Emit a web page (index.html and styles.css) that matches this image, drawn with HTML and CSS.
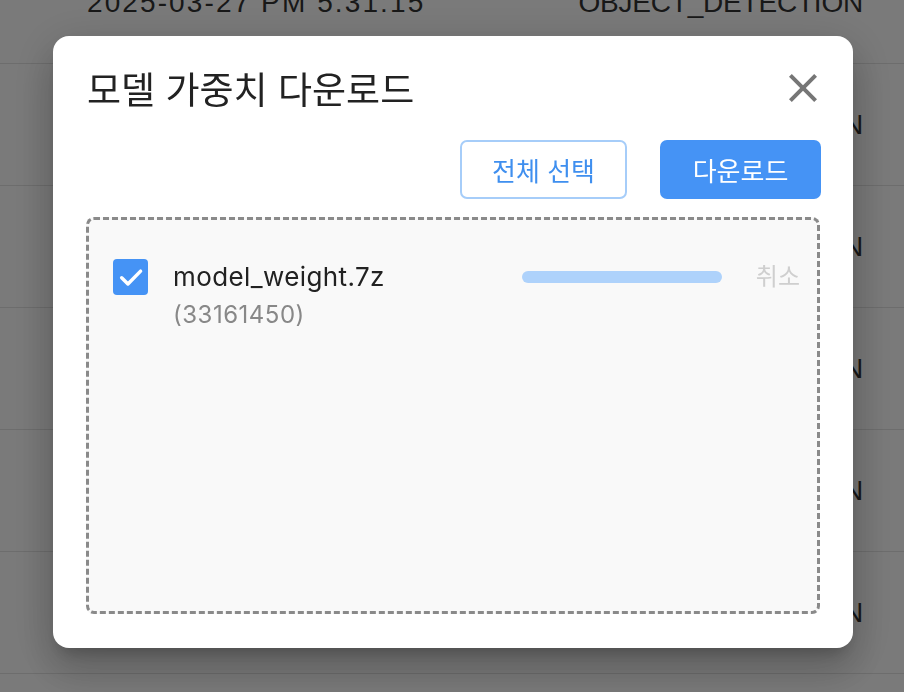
FILE: index.html
```html
<!DOCTYPE html>
<html lang="ko">
<head>
<meta charset="utf-8">
<title>모델 가중치 다운로드</title>
<link rel="stylesheet" href="styles.css">
</head>
<body>
<div class="page">
  <div class="table">
    <div class="row"><span class="date">2025-03-27 PM 5:31:15</span><span class="type">OBJECT_DETECTION</span></div>
    <div class="row"><span class="date">2025-03-27 PM 5:31:15</span><span class="type">OBJECT_DETECTION</span></div>
    <div class="row"><span class="date">2025-03-27 PM 5:31:15</span><span class="type">OBJECT_DETECTION</span></div>
    <div class="row"><span class="date">2025-03-27 PM 5:31:15</span><span class="type">OBJECT_DETECTION</span></div>
    <div class="row"><span class="date">2025-03-27 PM 5:31:15</span><span class="type">OBJECT_DETECTION</span></div>
    <div class="row"><span class="date">2025-03-27 PM 5:31:15</span><span class="type">OBJECT_DETECTION</span></div>
  </div>
</div>
<div class="overlay">
  <div class="dialog">
    <div class="header">
      <h2 class="title">모델 가중치 다운로드</h2>
      <button class="close" aria-label="닫기">
        <svg viewBox="0 0 24 24" width="48" height="48"><path d="M19 6.41 17.59 5 12 10.59 6.41 5 5 6.41 10.59 12 5 17.59 6.41 19 12 13.41 17.59 19 19 17.59 13.41 12z" fill="currentColor"/></svg>
      </button>
    </div>
    <div class="actions">
      <button class="btn btn-outline">전체 선택</button>
      <button class="btn btn-primary">다운로드</button>
    </div>
    <div class="filebox">
      <div class="file">
        <span class="check">
          <svg viewBox="0 0 24 24" width="32" height="32"><path d="M5 12.6 9.7 17.2 19.2 7.6" fill="none" stroke="#fff" stroke-width="2.6" stroke-linecap="round" stroke-linejoin="round"/></svg>
        </span>
        <div class="info">
          <div class="name">model_weight.7z</div>
          <div class="size">(33161450)</div>
        </div>
        <div class="progress"></div>
        <span class="cancel">취소</span>
      </div>
    </div>
  </div>
</div>
</body>
</html>
```
FILE: styles.css
```css
* { box-sizing: border-box; }
html, body { margin: 0; padding: 0; }
body {
  width: 904px;
  height: 692px;
  overflow: hidden;
  background: #fff;
  font-family: "Inter", "Noto Sans CJK KR", sans-serif;
}
.page {
  height: 692px;
  overflow: hidden;
}
.table { margin-top: -58px; }
.row {
  height: 122px;
  border-bottom: 1px solid #e4e4e4;
  display: flex;
  align-items: center;
  justify-content: space-between;
  padding: 1px 41px 0 87px;
  font-family: "Liberation Sans", Arial, sans-serif;
  font-size: 28px;
  color: #333;
}
.date { letter-spacing: 2.1px; }
.type { letter-spacing: -0.2px; }
.overlay {
  position: fixed;
  inset: 0;
  background: rgba(0, 0, 0, 0.52);
  display: flex;
  justify-content: center;
  align-items: flex-start;
  padding-top: 36px;
  padding-left: 2px;
}
.dialog {
  width: 800px;
  height: 612px;
  background: #fff;
  border-radius: 16px;
  padding: 24px 32px 34px 33px;
  display: flex;
  flex-direction: column;
  box-shadow: 0 11px 15px -7px rgba(0,0,0,.2), 0 24px 38px 3px rgba(0,0,0,.14), 0 9px 46px 8px rgba(0,0,0,.12);
}
.header {
  height: 56px;
  display: flex;
  align-items: center;
  justify-content: space-between;
}
.title {
  margin: 0 0 0 1px;
  font-size: 37px;
  font-weight: 400;
  color: #222;
  letter-spacing: 0;
}
.close {
  border: 0;
  background: none;
  padding: 0;
  margin-right: -6px;
  width: 48px;
  height: 48px;
  color: #767676;
  display: flex;
}
.actions {
  margin-top: 24px;
  display: flex;
  justify-content: flex-end;
  gap: 33px;
}
.btn {
  height: 59px;
  border-radius: 7px;
  font-family: "Inter", "Noto Sans CJK KR", sans-serif;
  font-size: 26px;
  padding: 0;
}
.btn-outline {
  width: 167px;
  background: #fff;
  border: 2px solid #a6cdf9;
  color: #3f8fef;
}
.btn-primary {
  width: 161px;
  background: #4593f5;
  border: 0;
  color: #fff;
}
.filebox {
  margin-top: 18px;
  height: 397px;
  margin-right: 1px;
  border: 3px dashed #8a8a8a;
  border-radius: 8px;
  background: #f9f9f9;
  padding: 39px 17px 0 24px;
}
.file {
  display: flex;
  align-items: flex-start;
}
.check {
  width: 35px;
  height: 36px;
  border-radius: 4px;
  background: #4593f5;
  display: flex;
  align-items: center;
  justify-content: center;
  margin-right: 25px;
}
.info { flex: 1; }
.name {
  font-size: 26px;
  line-height: 36px;
  letter-spacing: 0.4px;
  color: #222;
}
.size {
  margin-top: 6px;
  font-size: 24px;
  line-height: 28px;
  letter-spacing: 0.5px;
  color: #888;
}
.progress {
  width: 200px;
  height: 12px;
  margin-top: 12px;
  border-radius: 6px;
  background: #aed2fb;
}
.cancel {
  margin-left: 34px;
  font-size: 24px;
  line-height: 36px;
  color: #cfcfcf;
}
```
